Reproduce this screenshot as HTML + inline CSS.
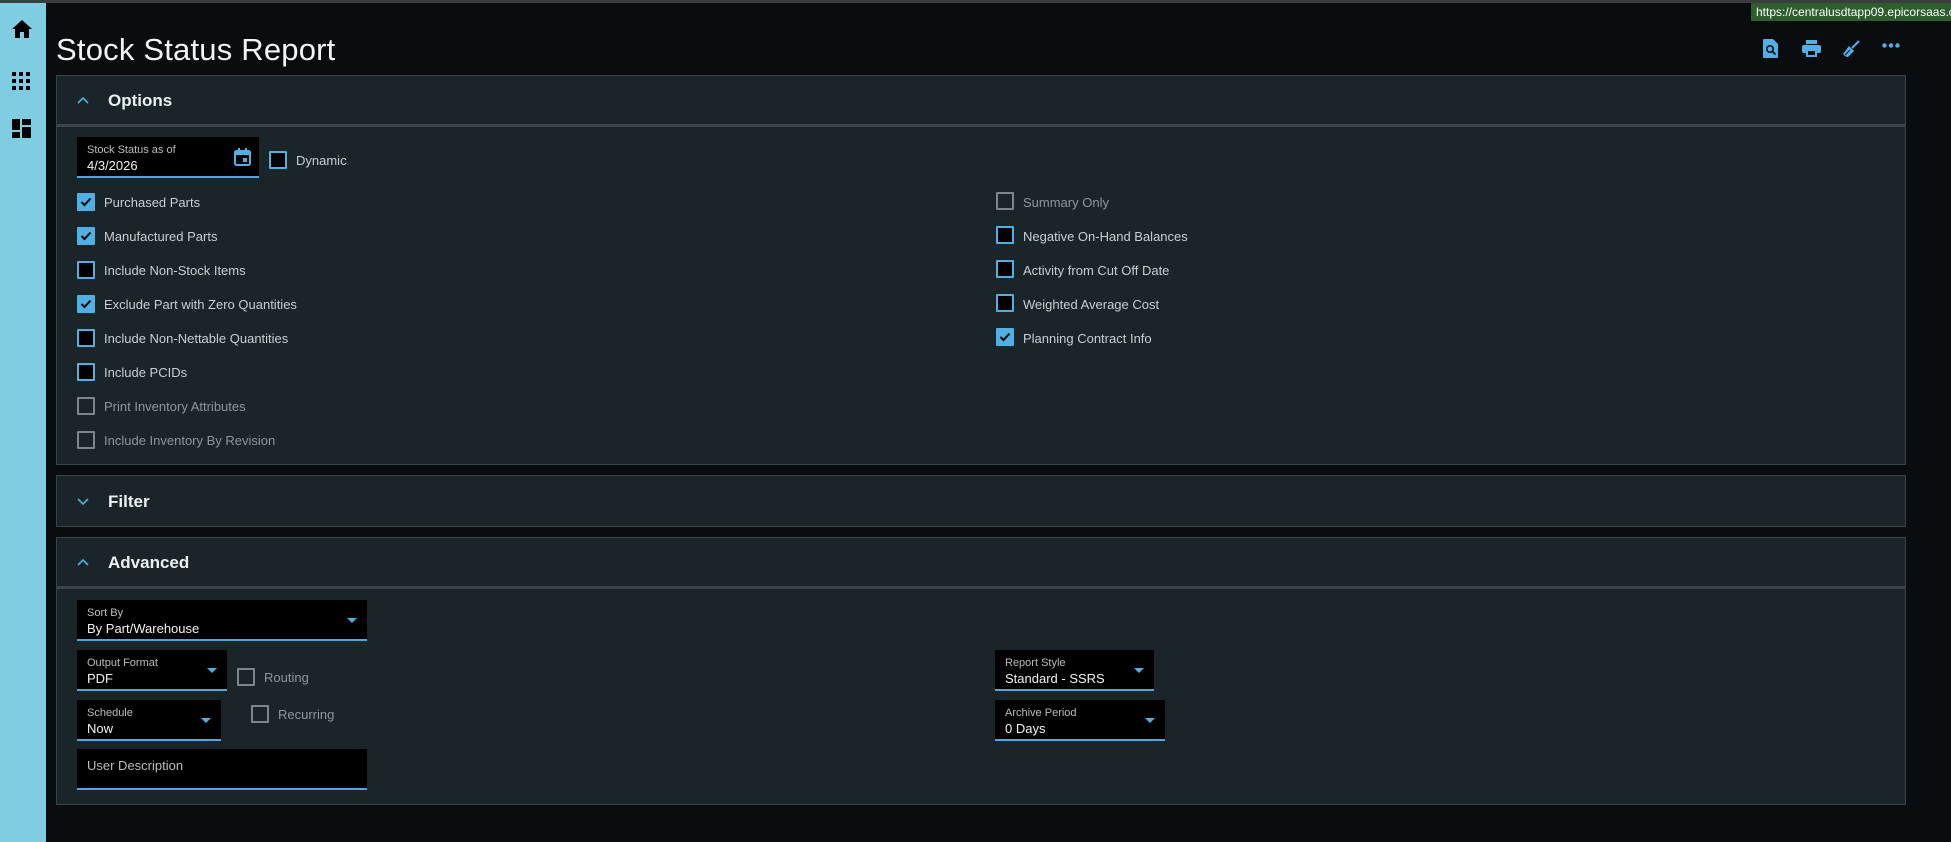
<!DOCTYPE html>
<html><head><meta charset="utf-8"><style>
*{box-sizing:border-box;margin:0;padding:0}
body{width:1951px;height:842px;background:#0a0d10;font-family:"Liberation Sans",sans-serif;position:relative;overflow:hidden;color:#d0d5d8}
.abs{position:absolute}
.topline{left:0;top:0;width:1951px;height:3px;background:#3a3d40}
.side{left:0;top:3px;width:46px;height:839px;background:#7fcde2}
.url{left:1751px;top:3px;width:200px;height:18px;background:#2e5e2e;color:#fff;font-size:12px;line-height:18px;padding-left:5px;white-space:nowrap;overflow:hidden}
.title{left:56px;top:32px;font-size:31px;color:#f2f4f5;letter-spacing:0.2px}
.panel{background:#1a2529;border:1px solid #3a4245}
.ph{left:0;top:0;right:0;height:51px;border-bottom:3px solid #3b4549}
.ph span{position:absolute;left:51px;top:15px;font-size:17px;font-weight:bold;color:#eef1f2}
.chev{position:absolute;left:20px;top:20px}
.cb{position:absolute;width:18px;height:18px;border:2px solid #4fb0e6;background:#000;border-radius:1px}
.cb.on{background:#4fb0e6}
.cb.dis{border-color:#7f8588;background:transparent}
.lbl{position:absolute;font-size:13px;color:#c9ced1;white-space:nowrap}
.lbl.dis{color:#8f9699}
.fld{position:absolute;background:#000;border-bottom:2px solid #4fa8dc}
.fld .l{position:absolute;left:10px;top:7px;font-size:11px;color:#b8bdc0}
.fld .v{position:absolute;left:10px;top:21px;font-size:13px;color:#f0f2f3}
.dd{position:absolute;right:10px;top:18px;width:0;height:0;border-left:5px solid transparent;border-right:5px solid transparent;border-top:5px solid #4fb0e6}
</style></head><body>
<div class="abs topline"></div>
<div class="abs side">
<svg class="abs" style="left:11px;top:16px" width="22" height="20" viewBox="0 0 22 20"><path d="M11 1 L1 10 H4 V19 H9 V13 H13 V19 H18 V10 H21 Z" fill="#000"/></svg>
<svg class="abs" style="left:12px;top:69px" width="18" height="18" viewBox="0 0 18 18" fill="#000"><rect x="0" y="0" width="4" height="4"/><rect x="7" y="0" width="4" height="4"/><rect x="14" y="0" width="4" height="4"/><rect x="0" y="7" width="4" height="4"/><rect x="7" y="7" width="4" height="4"/><rect x="14" y="7" width="4" height="4"/><rect x="0" y="14" width="4" height="4"/><rect x="7" y="14" width="4" height="4"/><rect x="14" y="14" width="4" height="4"/></svg>
<svg class="abs" style="left:12px;top:116px" width="19" height="19" viewBox="0 0 19 19" fill="#000"><rect x="0" y="0" width="8" height="11"/><rect x="0" y="13" width="8" height="6"/><rect x="10" y="0" width="9" height="6"/><rect x="10" y="8" width="9" height="11"/></svg>
</div>
<div class="abs url">https://centralusdtapp09.epicorsaas.com</div>
<div class="abs title">Stock Status Report</div>

<svg class="abs" style="left:1763px;top:39px" width="16" height="19" viewBox="0 0 16 19"><path d="M0 1 Q0 0 1 0 H10 L15 5 V18 Q15 19 14 19 H1 Q0 19 0 18 Z" fill="#4fb0e6"/><circle cx="7" cy="10" r="3.2" fill="none" stroke="#0a0d10" stroke-width="1.6"/><path d="M9.3 12.3 L12.5 15.5" stroke="#0a0d10" stroke-width="1.8"/></svg>
<svg class="abs" style="left:1802px;top:40px" width="19" height="17" viewBox="0 0 19 17" fill="#4fb0e6"><rect x="4" y="0" width="11" height="4"/><rect x="0" y="5" width="19" height="8" rx="2"/><rect x="4" y="10" width="11" height="7"/><rect x="6" y="11" width="7" height="4" fill="#0a0d10"/></svg>
<svg class="abs" style="left:1842px;top:40px" width="18" height="18" viewBox="0 0 18 18"><path d="M17 1 L10 8" stroke="#4fb0e6" stroke-width="2"/><path d="M7 6 L12 11 L6 17 Q3 17 1 14 Z" fill="#4fb0e6"/><path d="M3 15 L8 10" stroke="#0a0d10" stroke-width="1"/></svg>
<svg class="abs" style="left:1882px;top:43px" width="18" height="5" viewBox="0 0 18 5" fill="#4fb0e6"><circle cx="2.5" cy="2.5" r="2.2"/><circle cx="9" cy="2.5" r="2.2"/><circle cx="15.5" cy="2.5" r="2.2"/></svg>

<!-- Options -->
<div class="abs panel" style="left:56px;top:75px;width:1850px;height:390px">
<div class="abs ph"><svg class="chev" width="12" height="8" viewBox="0 0 12 8"><path d="M1 7 L6 2 L11 7" fill="none" stroke="#4fb0e6" stroke-width="1.6"/></svg><span>Options</span></div>
</div>
<div class="fld" style="left:77px;top:137px;width:182px;height:41px"><div class="l">Stock Status as of</div><div class="v">4/3/2026</div>
<svg class="abs" style="left:157px;top:11px" width="17" height="18" viewBox="0 0 17 18"><rect x="1" y="3" width="15" height="14" rx="1.5" fill="none" stroke="#4fb0e6" stroke-width="2"/><rect x="1" y="3" width="15" height="4" fill="#4fb0e6"/><rect x="4" y="0" width="2" height="4" fill="#4fb0e6"/><rect x="11" y="0" width="2" height="4" fill="#4fb0e6"/><rect x="9" y="10" width="4" height="4" fill="#4fb0e6"/></svg></div>
<div class="cb" style="left:269px;top:151px"></div><div class="lbl" style="left:296px;top:153px">Dynamic</div>

<div class="cb on" style="left:77px;top:193px"><svg width="14" height="14" viewBox="0 0 14 14"><path d="M2.5 7 L5.5 10 L11.5 3.5" fill="none" stroke="#000" stroke-width="2"/></svg></div><div class="lbl" style="left:104px;top:195px">Purchased Parts</div>
<div class="cb on" style="left:77px;top:227px"><svg width="14" height="14" viewBox="0 0 14 14"><path d="M2.5 7 L5.5 10 L11.5 3.5" fill="none" stroke="#000" stroke-width="2"/></svg></div><div class="lbl" style="left:104px;top:229px">Manufactured Parts</div>
<div class="cb" style="left:77px;top:261px"></div><div class="lbl" style="left:104px;top:263px">Include Non-Stock Items</div>
<div class="cb on" style="left:77px;top:295px"><svg width="14" height="14" viewBox="0 0 14 14"><path d="M2.5 7 L5.5 10 L11.5 3.5" fill="none" stroke="#000" stroke-width="2"/></svg></div><div class="lbl" style="left:104px;top:297px">Exclude Part with Zero Quantities</div>
<div class="cb" style="left:77px;top:329px"></div><div class="lbl" style="left:104px;top:331px">Include Non-Nettable Quantities</div>
<div class="cb" style="left:77px;top:363px"></div><div class="lbl" style="left:104px;top:365px">Include PCIDs</div>
<div class="cb dis" style="left:77px;top:397px"></div><div class="lbl dis" style="left:104px;top:399px">Print Inventory Attributes</div>
<div class="cb dis" style="left:77px;top:431px"></div><div class="lbl dis" style="left:104px;top:433px">Include Inventory By Revision</div>

<div class="cb dis" style="left:996px;top:192px"></div><div class="lbl dis" style="left:1023px;top:195px">Summary Only</div>
<div class="cb" style="left:996px;top:226px"></div><div class="lbl" style="left:1023px;top:229px">Negative On-Hand Balances</div>
<div class="cb" style="left:996px;top:260px"></div><div class="lbl" style="left:1023px;top:263px">Activity from Cut Off Date</div>
<div class="cb" style="left:996px;top:294px"></div><div class="lbl" style="left:1023px;top:297px">Weighted Average Cost</div>
<div class="cb on" style="left:996px;top:328px"><svg width="14" height="14" viewBox="0 0 14 14"><path d="M2.5 7 L5.5 10 L11.5 3.5" fill="none" stroke="#000" stroke-width="2"/></svg></div><div class="lbl" style="left:1023px;top:331px">Planning Contract Info</div>

<!-- Filter -->
<div class="abs panel" style="left:56px;top:475px;width:1850px;height:52px">
<svg class="chev" style="top:22px" width="12" height="8" viewBox="0 0 12 8"><path d="M1 1 L6 6 L11 1" fill="none" stroke="#4fb0e6" stroke-width="1.6"/></svg><span style="position:absolute;left:51px;top:16px;font-size:17px;font-weight:bold;color:#eef1f2">Filter</span>
</div>

<!-- Advanced -->
<div class="abs panel" style="left:56px;top:537px;width:1850px;height:268px">
<div class="abs ph"><svg class="chev" width="12" height="8" viewBox="0 0 12 8"><path d="M1 7 L6 2 L11 7" fill="none" stroke="#4fb0e6" stroke-width="1.6"/></svg><span>Advanced</span></div>
</div>
<div class="fld" style="left:77px;top:600px;width:290px;height:41px"><div class="l">Sort By</div><div class="v">By Part/Warehouse</div><div class="dd"></div></div>
<div class="fld" style="left:77px;top:650px;width:150px;height:41px"><div class="l">Output Format</div><div class="v">PDF</div><div class="dd"></div></div>
<div class="cb dis" style="left:237px;top:668px"></div><div class="lbl dis" style="left:264px;top:670px">Routing</div>
<div class="fld" style="left:77px;top:700px;width:144px;height:41px"><div class="l">Schedule</div><div class="v">Now</div><div class="dd"></div></div>
<div class="cb dis" style="left:251px;top:705px"></div><div class="lbl dis" style="left:278px;top:707px">Recurring</div>
<div class="fld" style="left:77px;top:749px;width:290px;height:41px"><div class="l" style="top:9px;font-size:13px">User Description</div></div>
<div class="fld" style="left:995px;top:650px;width:159px;height:41px"><div class="l">Report Style</div><div class="v">Standard - SSRS</div><div class="dd"></div></div>
<div class="fld" style="left:995px;top:700px;width:170px;height:41px"><div class="l">Archive Period</div><div class="v">0 Days</div><div class="dd"></div></div>
</body></html>
